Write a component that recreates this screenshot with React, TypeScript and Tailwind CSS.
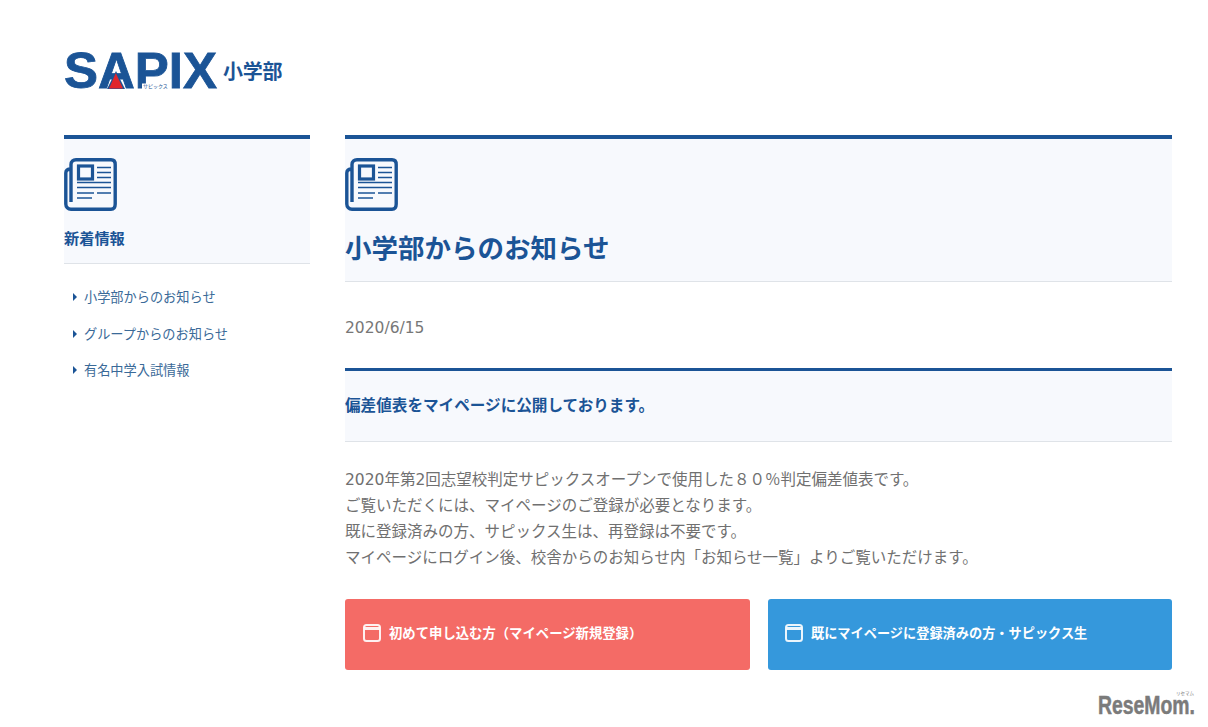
const NAV_ITEMS = ["小学部からのお知らせ", "グループからのお知らせ", "有名中学入試情報"];

const BODY_LINES = [
  "2020年第2回志望校判定サピックスオープンで使用した８０％判定偏差値表です。",
  "ご覧いただくには、マイページのご登録が必要となります。",
  "既に登録済みの方、サピックス生は、再登録は不要です。",
  "マイページにログイン後、校舎からのお知らせ内「お知らせ一覧」よりご覧いただけます。",
];

const NewsIcon = () => (
  <svg width="53" height="53" viewBox="0 0 53 53" fill="none" stroke="#1b5496" className="block">
    <path
      d="M7 44V6.5C7 3.5 9 1.8 12 1.8H47C50 1.8 51.2 3.5 51.2 6.5V46C51.2 49 50 51.2 47 51.2H7C4 51.2 1.8 49 1.8 46V15C1.8 12.5 3 11 7 11"
      strokeWidth="3.4"
    />
    <rect x="14.5" y="8" width="14" height="13" strokeWidth="3.2" />
    <path
      d="M33 9.5H47M33 14.5H47M33 19.5H47M13 24.5H47M13 29.5H47M13 35H30M33 35H47M13 40H28"
      strokeWidth="1.5"
    />
  </svg>
);

const CalendarIcon = () => (
  <svg width="18" height="18" viewBox="0 0 18 18" fill="none" className="block shrink-0">
    <rect x="1" y="1" width="16" height="16" rx="2.5" stroke="#fff" strokeOpacity="0.9" strokeWidth="2" />
    <path d="M1.5 4.5H16.5" stroke="#fff" strokeOpacity="0.9" strokeWidth="3" />
  </svg>
);

const Logo = () => (
  <div className="flex items-center">
    <svg width="153" height="37" viewBox="0 0 153 37" className="block overflow-visible">
      <text
        x="0"
        y="36"
        textLength="153"
        lengthAdjust="spacingAndGlyphs"
        fontFamily="'Liberation Sans', sans-serif"
        fontWeight="700"
        fontSize="50"
        fill="#1b5496"
        stroke="#1b5496"
        strokeWidth="0.8"
      >
        SAPIX
      </text>
      <path d="M52 19L43 37H61Z" fill="#1b5496" />
      <path d="M51.8 21L45 36.5H59Z" fill="#e0262c" />
      <rect x="78" y="31.5" width="27" height="5.5" fill="#fff" />
      <text x="79" y="36" fontSize="5" fill="#1b5496" fontFamily="'Noto Sans CJK JP', sans-serif">
        サピックス
      </text>
    </svg>
    <span className="ml-[6px] text-[20px] leading-none font-semibold tracking-[-0.2px] text-[#1b5496]">
      小学部
    </span>
  </div>
);

const Watermark = () => (
  <svg width="100" height="28" viewBox="0 0 100 28" className="absolute top-[690px] left-[1097px] block overflow-visible">
    <text
      x="1"
      y="24"
      textLength="97"
      lengthAdjust="spacingAndGlyphs"
      fontFamily="'Liberation Sans', sans-serif"
      fontWeight="700"
      fontSize="25"
      fill="#7b7b7b"
      stroke="#7b7b7b"
      strokeWidth="0.5"
    >
      ReseMom.
    </text>
    <text x="79" y="5" fontSize="4.5" fill="#7b7b7b" fontFamily="'Noto Sans CJK JP', sans-serif">
      リセマム
    </text>
  </svg>
);

export default function App() {
  return (
    <div
      className="relative h-[727px] overflow-hidden bg-white px-[64px] pt-[52px] text-[#707070]"
      style={{ fontFamily: "'Noto Sans CJK JP', 'Noto Sans', sans-serif" }}
    >
      <header className="h-[83px]">
        <Logo />
      </header>

      <div className="flex w-[1108px] gap-[35px]">
        <aside className="w-[246px] shrink-0">
          <div className="h-[129px] border-t-4 border-b border-t-[#1b5496] border-b-[#dfe3e8] bg-[#f7f9fd] pt-[19px]">
            <NewsIcon />
            <h2 className="mt-[15px] text-[15.2px] leading-[22px] font-bold text-[#1b5496]">新着情報</h2>
          </div>
          <ul className="mt-[15px] flex flex-col text-[13.2px] leading-[36.5px] text-[#3a6a98]">
            {NAV_ITEMS.map((item) => (
              <li key={item} className="flex items-center pl-[9px]">
                <span className="mr-[7px] h-0 w-0 border-y-[4px] border-l-[4px] border-y-transparent border-l-[#1b5496]" />
                {item}
              </li>
            ))}
          </ul>
        </aside>

        <main className="min-w-0 flex-1">
          <div className="h-[147px] border-t-4 border-b border-t-[#1b5496] border-b-[#dfe3e8] bg-[#f7f9fd] pt-[19px]">
            <NewsIcon />
            <h1 className="mt-[17px] text-[26.5px] leading-[38px] font-bold text-[#1b5496]">小学部からのお知らせ</h1>
          </div>

          <p
            className="mt-[35px] text-[15.5px] leading-[22px] text-[#777777]"
            style={{ fontFamily: "'DejaVu Sans', sans-serif" }}
          >
            2020/6/15
          </p>

          <div className="mt-[29px] flex h-[74px] items-center border-t-[3px] border-b border-t-[#1b5496] border-b-[#dfe3e8] bg-[#f7f9fd]">
            <h3 className="-mt-[2px] text-[15.6px] font-bold text-[#1b5496]">偏差値表をマイページに公開しております。</h3>
          </div>

          <div
            className="mt-[25px] text-[15.5px] leading-[26px]"
            style={{ fontFamily: "'DejaVu Sans', 'Noto Sans CJK JP', sans-serif" }}
          >
            {BODY_LINES.map((line) => (
              <p key={line}>{line}</p>
            ))}
          </div>

          <div className="mt-[28px] flex gap-[18px]">
            <a className="flex h-[71px] flex-1 items-center gap-[8px] rounded-[3px] bg-[#f46b66] pb-[3px] pl-[18px] text-[13.35px] font-bold text-white">
              <CalendarIcon />
              初めて申し込む方（マイページ新規登録）
            </a>
            <a className="flex h-[71px] flex-1 items-center gap-[8px] rounded-[3px] bg-[#3598dc] pb-[3px] pl-[17px] text-[13.2px] font-bold text-white">
              <CalendarIcon />
              既にマイページに登録済みの方・サピックス生
            </a>
          </div>
        </main>
      </div>

      <Watermark />
    </div>
  );
}
